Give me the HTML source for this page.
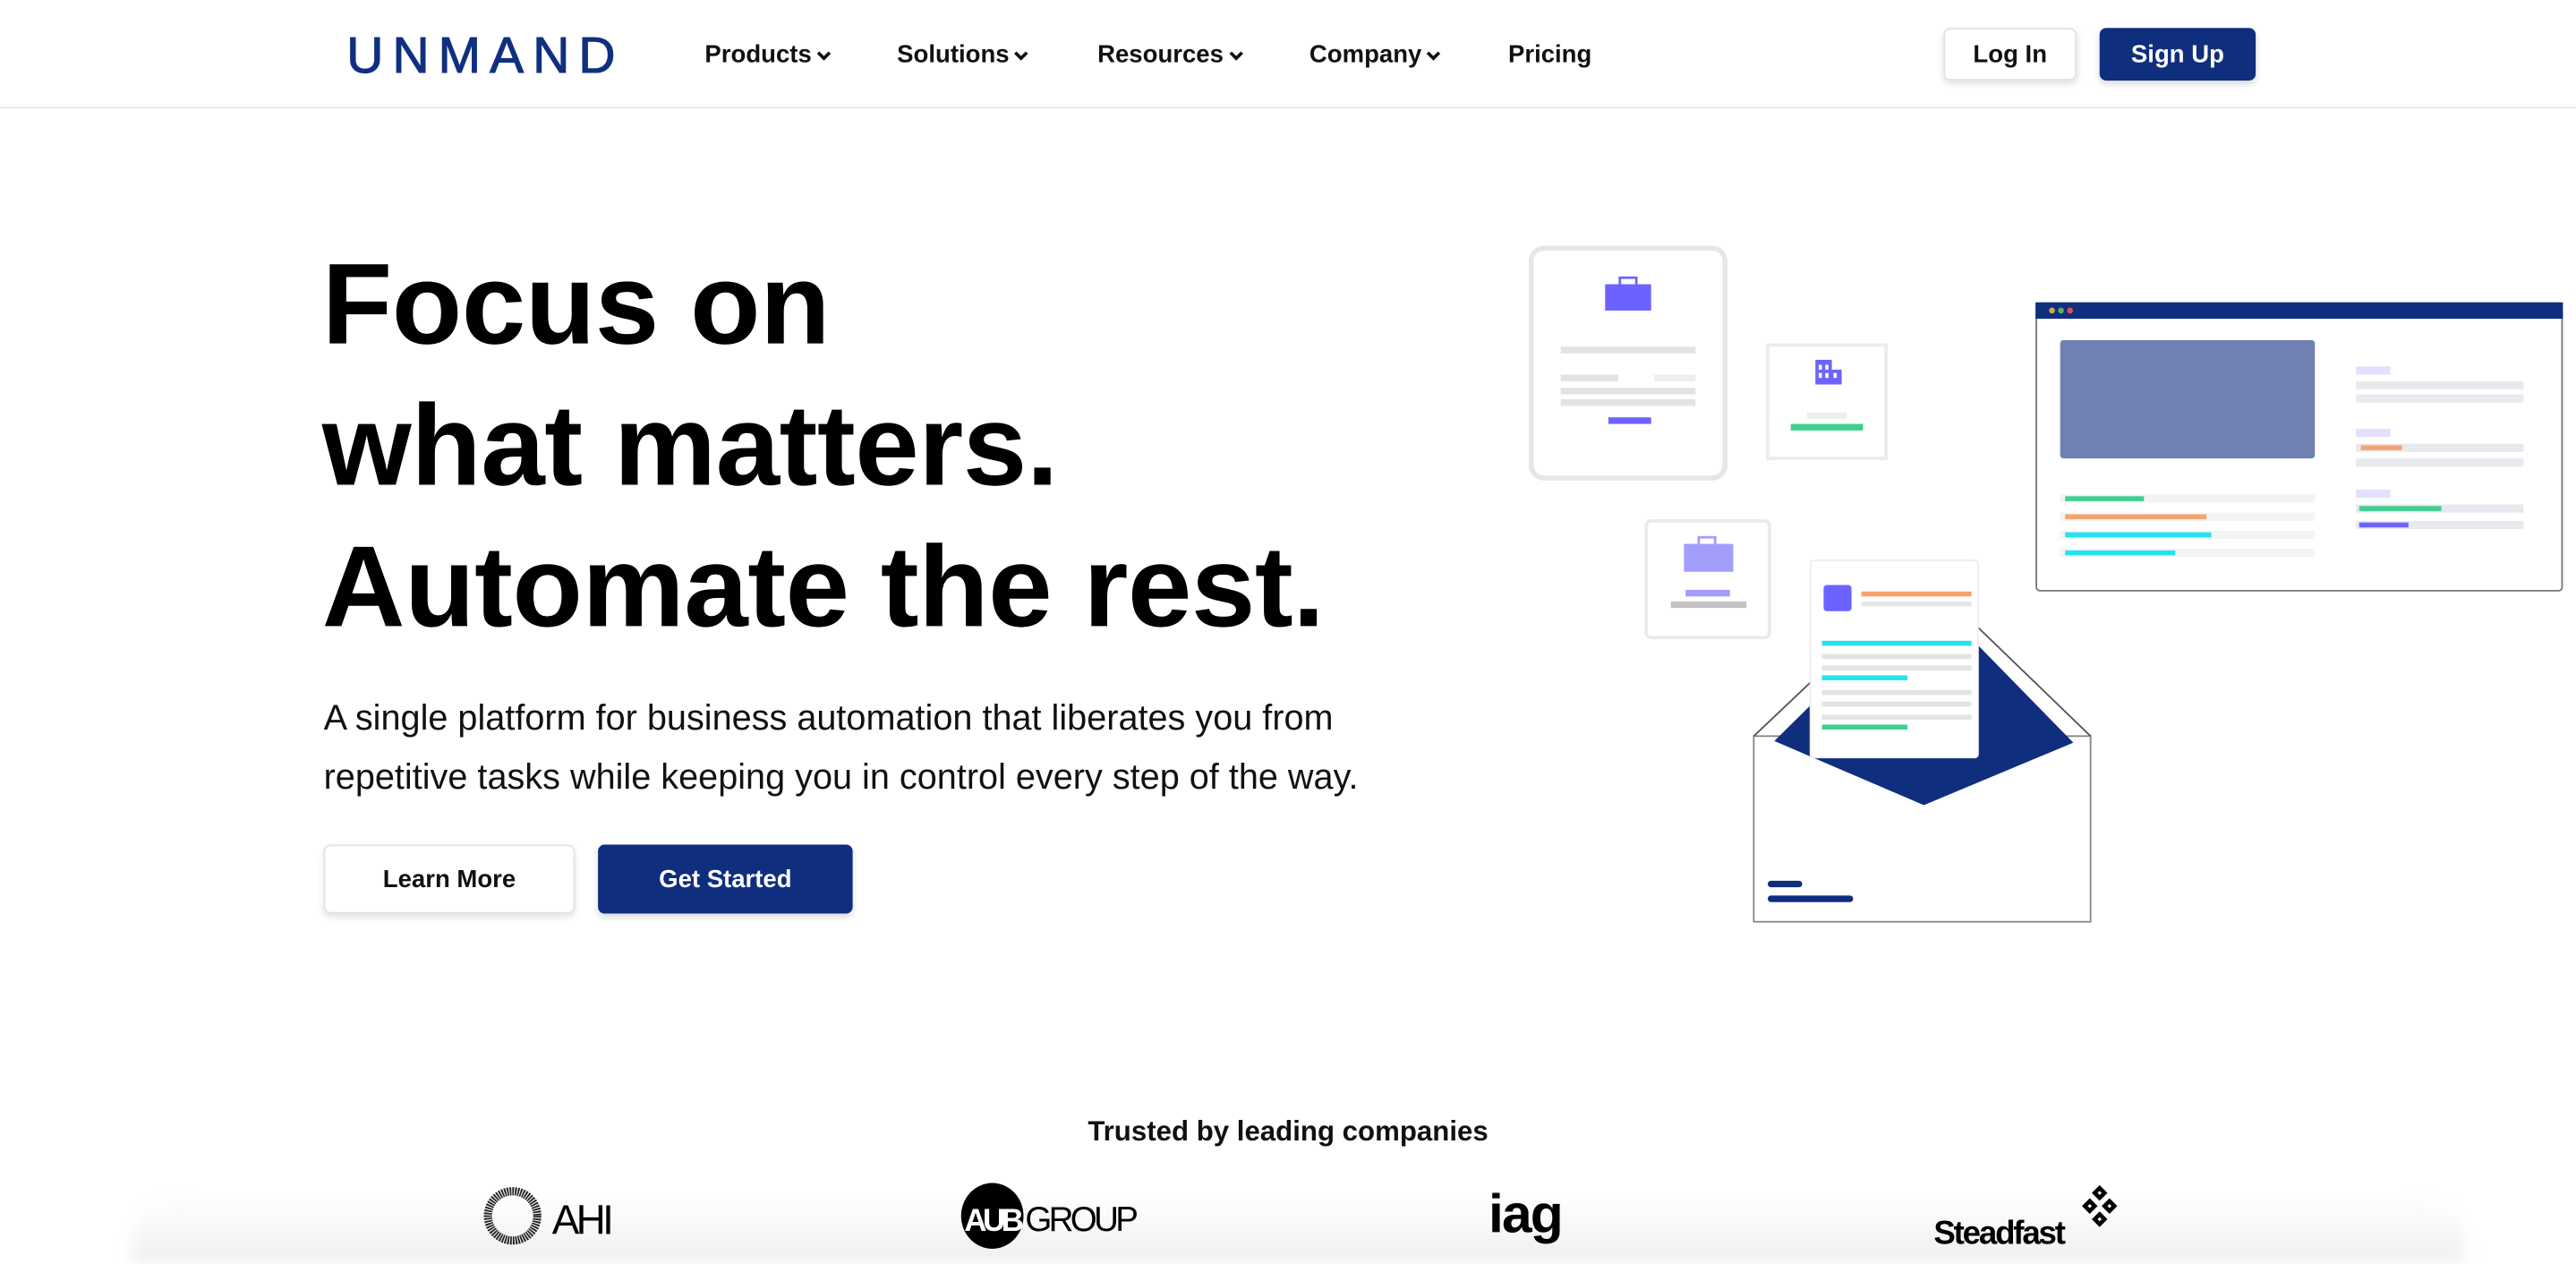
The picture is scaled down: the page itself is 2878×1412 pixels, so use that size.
<!DOCTYPE html>
<html><head><meta charset="utf-8"><style>
html,body{margin:0;padding:0;background:#fff;overflow:hidden}
body{width:2878px;height:1412px}
#w{position:absolute;left:0;top:0;width:1568px;height:769px;transform:scale(1.8355);transform-origin:0 0;font-family:"Liberation Sans",Arial,sans-serif;color:#000}
.nav{position:absolute;left:0;top:0;width:1568px;height:65px;border-bottom:1px solid #e6e6e6}
.logo{position:absolute;left:211px;top:16px;font-size:31px;letter-spacing:5.5px;color:#10307f;font-weight:400;-webkit-text-stroke:.6px #10307f}
.ni{position:absolute;top:25px;font-size:15px;font-weight:700;color:#111}
.ni svg{margin-left:3px;vertical-align:1px}
.btn{position:absolute;box-sizing:border-box;border-radius:4px;font-weight:700;display:flex;align-items:center;justify-content:center}
.wh{background:#fff;border:1px solid #e3e3e3;box-shadow:0 2px 4px rgba(0,0,0,.12);color:#111}
.bl{background:#0f2e7e;color:#fff;box-shadow:0 2px 4px rgba(0,0,0,.15)}
h1{position:absolute;left:196px;top:142px;margin:0;font-size:70px;line-height:86px;font-weight:700;letter-spacing:-.25px}
p{position:absolute;left:197px;top:419px;margin:0;font-size:21.6px;line-height:36px;color:#111}
.tr{position:absolute;left:0;width:1568px;top:679px;text-align:center;font-size:17px;font-weight:700;color:#111}
.bot{position:absolute;left:80px;top:728px;width:1420px;height:41px;background:linear-gradient(#fff,#efefef);border-radius:30px 30px 0 0;filter:blur(4px)}
</style></head><body><div id="w">
<div class="nav">
<div class="logo">UNMAND</div>
<div class="ni" style="left:429px">Products<svg width="9" height="6"><path d="M1 1l3.5 3.5L8 1" stroke="#111" stroke-width="2" fill="none"/></svg></div>
<div class="ni" style="left:546px">Solutions<svg width="9" height="6"><path d="M1 1l3.5 3.5L8 1" stroke="#111" stroke-width="2" fill="none"/></svg></div>
<div class="ni" style="left:668px">Resources<svg width="9" height="6"><path d="M1 1l3.5 3.5L8 1" stroke="#111" stroke-width="2" fill="none"/></svg></div>
<div class="ni" style="left:797px">Company<svg width="9" height="6"><path d="M1 1l3.5 3.5L8 1" stroke="#111" stroke-width="2" fill="none"/></svg></div>
<div class="ni" style="left:918px">Pricing</div>
<div class="btn wh" style="left:1183px;top:17px;width:81px;height:32px;font-size:15px">Log In</div>
<div class="btn bl" style="left:1278px;top:17px;width:95px;height:32px;font-size:15px">Sign Up</div>
</div>
<h1>Focus on<br>what matters.<br>Automate the rest.</h1>
<p>A single platform for business automation that liberates you from<br>repetitive tasks while keeping you in control every step of the way.</p>
<div class="btn wh" style="left:197px;top:514px;width:153px;height:42px;font-size:15px">Learn More</div>
<div class="btn bl" style="left:364px;top:514px;width:155px;height:42px;font-size:15px">Get Started</div>
<div class="bot"></div>
<div class="tr">Trusted by leading companies</div>
<svg style="position:absolute;left:0;top:0" width="1568" height="769">
<rect x="932" y="151" width="118" height="140" rx="8" fill="#fff" stroke="#e6e6e6" stroke-width="3"/>
<rect x="977" y="173" width="28" height="16" fill="#6c63ff"/><rect x="986" y="169" width="10" height="5" fill="none" stroke="#6c63ff" stroke-width="1.5"/>
<rect x="950" y="211" width="82" height="4" fill="#e3e3e3"/>
<rect x="950" y="228" width="35" height="4" fill="#e3e3e3"/><rect x="1007" y="228" width="25" height="4" fill="#eee"/>
<rect x="950" y="236" width="82" height="4" fill="#e3e3e3"/><rect x="950" y="243" width="82" height="4" fill="#e3e3e3"/>
<rect x="979" y="254" width="26" height="4" fill="#6c63ff"/>
<rect x="1076" y="210" width="72" height="69" fill="#fff" stroke="#ececec" stroke-width="2"/>
<rect x="1105" y="219" width="10" height="15" fill="#6c63ff"/><rect x="1114" y="225" width="7" height="9" fill="#6c63ff"/>
<rect x="1107" y="222" width="2" height="3" fill="#fff"/><rect x="1111" y="222" width="2" height="3" fill="#fff"/><rect x="1107" y="227" width="2" height="3" fill="#fff"/><rect x="1111" y="227" width="2" height="3" fill="#fff"/><rect x="1116" y="227" width="2" height="3" fill="#fff"/>
<rect x="1100" y="251" width="24" height="4" fill="#eee"/><rect x="1090" y="258" width="44" height="4" fill="#3ecf8e"/>
<rect x="1002" y="317" width="75" height="71" rx="3" fill="#fff" stroke="#eaeaea" stroke-width="2"/>
<rect x="1025" y="331" width="30" height="17" fill="#a39dfc"/><rect x="1034" y="327" width="10" height="5" fill="none" stroke="#a39dfc" stroke-width="1.5"/>
<rect x="1026" y="359" width="27" height="4" fill="#a39dfc"/><rect x="1017" y="366" width="46" height="4" fill="#c2c2c2"/>
<rect x="1239.5" y="184.5" width="320" height="175" rx="2" fill="#fff" stroke="#777" stroke-width="1"/>
<rect x="1239" y="184" width="321" height="10" fill="#0f2e7e"/>
<circle cx="1249" cy="189" r="1.8" fill="#d4a64a"/><circle cx="1254.5" cy="189" r="1.8" fill="#5cae58"/><circle cx="1260" cy="189" r="1.8" fill="#d9534f"/>
<rect x="1254" y="207" width="155" height="72" rx="2" fill="#7080b2"/>
<rect x="1434" y="223" width="21" height="5" fill="#e3e0ff"/><rect x="1434" y="232" width="102" height="5" fill="#e7e9ef"/><rect x="1434" y="240" width="102" height="5" fill="#e7e9ef"/>
<rect x="1434" y="261" width="21" height="5" fill="#e3e0ff"/><rect x="1434" y="270" width="102" height="5" fill="#e7e9ef"/><rect x="1437" y="271" width="25" height="3" fill="#f7a26e"/><rect x="1434" y="279" width="102" height="5" fill="#e7e9ef"/>
<rect x="1434" y="298" width="21" height="5" fill="#e3e0ff"/><rect x="1434" y="307" width="102" height="5" fill="#e7e9ef"/><rect x="1436" y="308" width="50" height="3" fill="#3ecf8e"/><rect x="1434" y="317" width="102" height="5" fill="#e7e9ef"/><rect x="1436" y="318" width="30" height="3" fill="#6c63ff"/>
<rect x="1254" y="301" width="155" height="5" fill="#f3f3f3"/><rect x="1257" y="302" width="48" height="3" fill="#3ecf8e"/>
<rect x="1254" y="312" width="155" height="5" fill="#f3f3f3"/><rect x="1257" y="313" width="86" height="3" fill="#f7a26e"/>
<rect x="1254" y="323" width="155" height="5" fill="#f3f3f3"/><rect x="1257" y="324" width="89" height="3" fill="#22e3ee"/>
<rect x="1254" y="334" width="155" height="5" fill="#f3f3f3"/><rect x="1257" y="335" width="67" height="3" fill="#22e3ee"/>
<rect x="1067.5" y="448" width="205" height="113" fill="#fff" stroke="#888" stroke-width="1"/>
<path d="M1067.5 448L1171 350L1272.5 448" fill="none" stroke="#555" stroke-width="1"/>
<path d="M1080 451L1172 360L1262 452L1171 490Z" fill="#0f2e7e"/>
<rect x="1102" y="341" width="102" height="120" rx="2" fill="#fff" stroke="#eee" stroke-width="1"/>
<rect x="1110" y="356" width="17" height="16" rx="2" fill="#6c63ff"/>
<rect x="1133" y="360" width="67" height="3" fill="#f7a26e"/><rect x="1133" y="366" width="67" height="3" fill="#e5e5e5"/>
<rect x="1109" y="390" width="91" height="3" fill="#22e3ee"/><rect x="1109" y="398" width="91" height="3" fill="#e3e3e3"/>
<rect x="1109" y="405" width="91" height="3" fill="#e3e3e3"/><rect x="1109" y="411" width="52" height="3" fill="#22e3ee"/>
<rect x="1109" y="420" width="91" height="3" fill="#e3e3e3"/><rect x="1109" y="427" width="91" height="3" fill="#e3e3e3"/>
<rect x="1109" y="435" width="91" height="3" fill="#e3e3e3"/><rect x="1109" y="441" width="52" height="3" fill="#3ecf8e"/>
<rect x="1076" y="536" width="21" height="4" rx="2" fill="#0f2e7e"/><rect x="1076" y="545" width="52" height="4" rx="2" fill="#0f2e7e"/>
<circle cx="312" cy="740" r="15" fill="none" stroke="#222" stroke-width="5" stroke-dasharray="1 .6"/>
<text x="336" y="751" font-family="Liberation Sans, sans-serif" font-size="25" letter-spacing="-2">AHI</text>
<ellipse cx="604" cy="740" rx="19" ry="20" fill="#000"/>
<text x="587" y="749" font-family="Liberation Sans, sans-serif" font-size="19" font-weight="700" fill="#fff" letter-spacing="-2.5">AUB</text>
<text x="624" y="749" font-family="Liberation Sans, sans-serif" font-size="21" letter-spacing="-2">GROUP</text>
<text x="906" y="750" font-family="Liberation Sans, sans-serif" font-size="33" font-weight="700" letter-spacing="-1">iag</text>
<text x="1177" y="757" font-family="Liberation Sans, sans-serif" font-size="20" font-weight="700" letter-spacing="-1.2">Steadfast</text>
<g fill="none" stroke="#000" stroke-width="2.5"><path d="M1278 723l3 3-3 3-3-3z"/><path d="M1272 731l3 3-3 3-3-3z"/><path d="M1284 731l3 3-3 3-3-3z"/><path d="M1278 739l3 3-3 3-3-3z"/></g>
</svg>
</div></body></html>
